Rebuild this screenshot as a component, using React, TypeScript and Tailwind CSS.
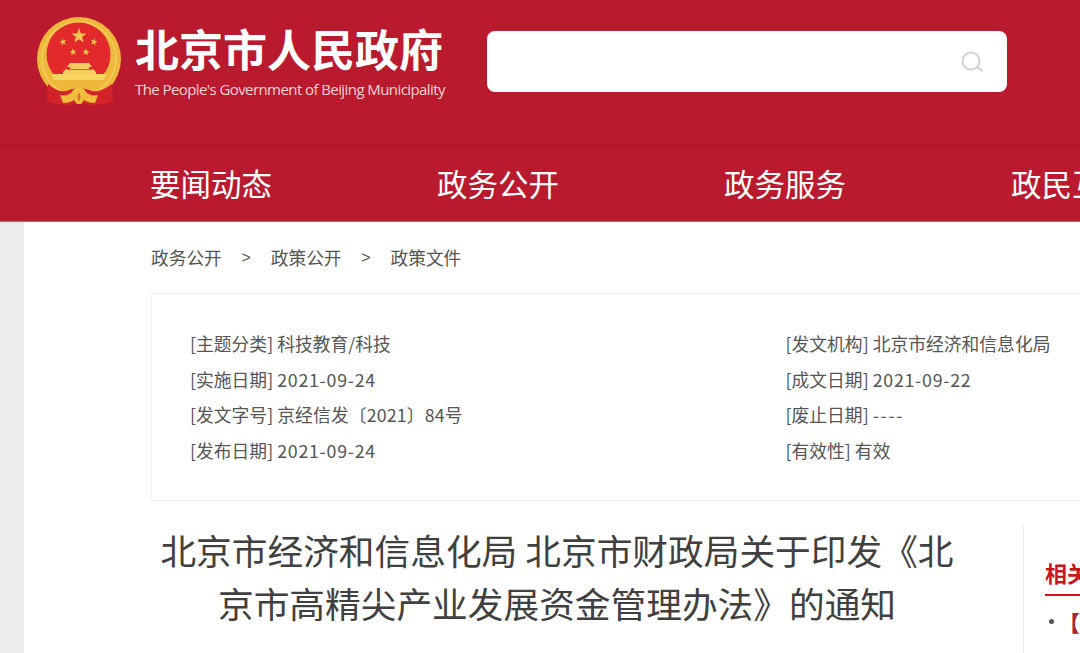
const cjk = "font-['Noto_Sans_CJK_SC','Liberation_Sans',sans-serif]";

const navItems = ['要闻动态', '政务公开', '政务服务', '政民互动'];

const infoRows = [
  { l1: '[主题分类]', v1: '科技教育/科技', c1: '', l2: '[发文机构]', v2: '北京市经济和信息化局', c2: '' },
  { l1: '[实施日期]', v1: '2021-09-24', c1: 'tracking-[0.75px]', l2: '[成文日期]', v2: '2021-09-22', c2: 'tracking-[0.75px]' },
  { l1: '[发文字号]', v1: '京经信发〔2021〕84号', c1: 'tracking-[0.15px]', l2: '[废止日期]', v2: '----', c2: 'tracking-[1.7px]' },
  { l1: '[发布日期]', v1: '2021-09-24', c1: 'tracking-[0.75px]', l2: '[有效性]', v2: '有效', c2: '' },
];

function Star({ x, y, r, rot = 0 }: { x: number; y: number; r: number; rot?: number }) {
  const pts: string[] = [];
  for (let i = 0; i < 10; i++) {
    const rad = i % 2 === 0 ? r : r * 0.4;
    const a = ((-90 + rot + i * 36) * Math.PI) / 180;
    pts.push(`${(x + rad * Math.cos(a)).toFixed(2)},${(y + rad * Math.sin(a)).toFixed(2)}`);
  }
  return <polygon points={pts.join(' ')} fill="#f3c84c" />;
}

function Emblem() {
  return (
    <svg width="86" height="92" viewBox="0 0 86 92" className="shrink-0">
      <circle cx="42" cy="43" r="42" fill="#eeb93a" />
      <circle cx="42" cy="43" r="37" fill="none" stroke="#f7d468" strokeWidth="2" opacity="0.6" />
      <clipPath id="emblem-sky">
        <rect x="0" y="0" width="86" height="64" />
      </clipPath>
      <circle cx="41.5" cy="38.5" r="32" fill="#e2292b" clipPath="url(#emblem-sky)" />
      <Star x={42} y={20} r={8} />
      <Star x={26} y={26} r={3.8} rot={-15} />
      <Star x={57} y={26} r={3.8} rot={15} />
      <Star x={36} y={36} r={3.8} rot={-10} />
      <Star x={49} y={36} r={3.8} rot={10} />
      <path d="M33 47h19l3 4h-3v2h4l3 3v2H26v-2l3-3h4v-2h-3z" fill="#f4cd5c" />
      <path d="M30 53h25v1H30z" fill="#d9622f" />
      <path d="M15 58h54l-2 6H17z" fill="#f6d45e" />
      <path d="M11 68c8 7 15 9 21 6 3-1 6-2 10-2s7 1 10 2c6 3 13 1 23-6l1 17c-9 4-20 5-30 3H40c-10 2-21 1-30-3z" fill="#d3222a" />
      <path d="M23 79c5 1 9 0 12-3 1-3 4-5 7-5s6 2 7 5c3 3 7 4 12 3l-3 8c-5 0-8-1-11-3l-3 4H40l-3-4c-3 2-6 3-11 3z" fill="#f0bd3a" />
      <path d="M42 76c-2 3-2 7 0 10 2-3 2-7 0-10z" fill="#d3222a" opacity="0.5" />
    </svg>
  );
}

export default function App() {
  return (
    <div className={`w-[1080px] h-[653px] overflow-hidden bg-white ${cjk}`}>
      <header className="h-[145px] bg-[#b91a2e] flex items-start">
        <div className="ml-[37px] mt-[16px] flex">
          <Emblem />
          <div className="ml-[12px] w-[320px]">
            <div className="text-[44px] leading-[44px] mt-[10px] font-bold text-white whitespace-nowrap">北京市人民政府</div>
            <div className="text-[15px] leading-[18px] mt-[10px] text-[#f3d3d6] tracking-[-0.58px] whitespace-nowrap font-['Open_Sans',sans-serif]">
              The People's Government of Beijing Municipality
            </div>
          </div>
        </div>
        <div className="ml-[32px] mt-[31px] w-[520px] h-[61px] rounded-lg bg-white flex items-center justify-end pr-[23px]">
          <svg width="24" height="24" viewBox="0 0 24 24" fill="none" stroke="#d3d4d6" strokeWidth="2.2" strokeLinecap="round">
            <circle cx="11" cy="11" r="8.5" />
            <path d="M17.5 17.5l4.5 3" />
          </svg>
        </div>
      </header>
      <nav className="h-[77px] bg-[#b91a2e] border-t border-[#a3182a] border-b border-b-[#d9596a] flex items-center pl-[150px] pb-[2px] overflow-hidden">
        {navItems.map((item) => (
          <div key={item} className="w-[287px] shrink-0 text-[30.5px] leading-[40px] text-white whitespace-nowrap">
            {item}
          </div>
        ))}
      </nav>
      <div className="flex h-[432px]">
        <div className="w-[24px] shrink-0 bg-[#eeedee]" />
        <main className="w-[1056px] shrink-0 pl-[127px]">
          <div className="flex items-center h-[71px] text-[17.7px] text-[#555555] whitespace-nowrap">
            <span>政务公开</span>
            <span className="w-[49px] text-center font-['Liberation_Sans',sans-serif] text-[16px]">&gt;</span>
            <span>政策公开</span>
            <span className="w-[49px] text-center font-['Liberation_Sans',sans-serif] text-[16px]">&gt;</span>
            <span>政策文件</span>
          </div>
          <section className="w-[1000px] h-[208px] border border-[#f1f1f1] pt-[32px] pl-[38px]">
            {infoRows.map((row) => (
              <div key={row.l1} className="flex h-[35.4px] items-center text-[17.8px] text-[#555555] whitespace-nowrap">
                <div className="w-[595.5px] shrink-0">
                  {row.l1} <span className={row.c1}>{row.v1}</span>
                </div>
                <div>
                  {row.l2} <span className={row.c2}>{row.v2}</span>
                </div>
              </div>
            ))}
          </section>
          <div className="flex mt-[23px]">
            <h1 className="w-[812px] shrink-0 text-[35.7px] leading-[53px] font-normal text-[#404040] text-center -mt-[1px]">
              北京市经济和信息化局 北京市财政局关于印发《北京市高精尖产业发展资金管理办法》的通知
            </h1>
            <aside className="ml-[60px] h-[200px] w-[200px] shrink-0 border-l border-[#ececec] pl-[21px] pt-[33px]">
              <div className="text-[22px] leading-[30px] font-bold text-[#c8161d] border-b-2 border-[#c8161d] pb-[7px] whitespace-nowrap">相关链接</div>
              <div className="flex items-center mt-[7px] text-[22px] leading-[36px] whitespace-nowrap">
                <span className="w-[5px] h-[5px] rounded-full bg-[#555555] ml-[4px] mr-[4px]" />
                <span className="font-bold text-[#a8242f]">【相关解读】</span>
              </div>
            </aside>
          </div>
        </main>
      </div>
    </div>
  );
}
